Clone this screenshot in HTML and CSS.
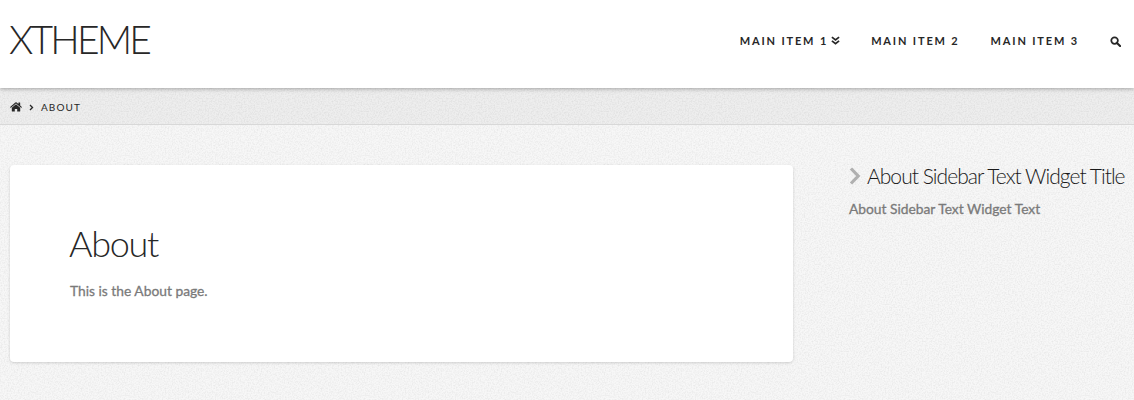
FILE: index.html
```html
<!DOCTYPE html>
<html lang="en">
<head>
    <meta charset="UTF-8">
    <meta name="viewport" content="width=device-width, initial-scale=1.0">
    <title>About - XTHEME</title>
    <link rel="stylesheet" href="styles.css">
</head>
<body>
    <header class="masthead">
        <a class="brand" href="#">XTHEME</a>
        <nav class="navbar">
            <a href="#">MAIN ITEM 1
                <svg class="icon-caret" viewBox="0 0 10 10" width="9" height="9"><path d="M1 1.2 5 4.4 9 1.2M1 5.4 5 8.6 9 5.4" fill="none" stroke="#272727" stroke-width="1.9"/></svg>
            </a>
            <a href="#">MAIN ITEM 2</a>
            <a href="#">MAIN ITEM 3</a>
            <a href="#" class="nav-search" aria-label="Search">
                <svg viewBox="0 0 12 12" width="11" height="11"><circle cx="5" cy="5" r="3.6" fill="none" stroke="#272727" stroke-width="1.9"/><path d="M7.6 7.6 11 11" stroke="#272727" stroke-width="2.3" stroke-linecap="round"/></svg>
            </a>
        </nav>
    </header>

    <div class="breadcrumbs">
        <svg class="icon-home" viewBox="0 0 24 20" width="12" height="10"><path d="M12 4.6 3.6 11.5V18a1 1 0 0 0 1 1h5v-5h4.8v5h5a1 1 0 0 0 1-1v-6.500zM23.700 9.800 20.400 7V1.500a.5.500 0 0 0-.5-.5h-2.600a.5.500 0 0 0-.5.500v2.400L13.400 1.200a2.200 2.200 0 0 0-2.800 0L.3 9.800a.5.500 0 0 0-.1.700l.9 1a.5.500 0 0 0 .7.1L12 3.100l10.200 8.500a.5.500 0 0 0 .7-.1l.9-1a.5.500 0 0 0-.1-.7z" fill="#272727"/></svg>
        <svg class="icon-sep" viewBox="0 0 6 8" width="5" height="7"><path d="M1.200 1 4.200 4 1.200 7" fill="none" stroke="#272727" stroke-width="1.600"/></svg>
        <span>ABOUT</span>
    </div>

    <main class="layout">
        <article class="card">
            <h1>About</h1>
            <p>This is the About page.</p>
        </article>
        <aside class="sidebar">
            <h4 class="widget-title">
                <svg viewBox="0 0 12 18" width="12" height="18"><path d="M2 1.500 9.200 9 2 16.500" fill="none" stroke="#b0b0b0" stroke-width="3.200"/></svg>
                About Sidebar Text Widget Title
            </h4>
            <p>About Sidebar Text Widget Text</p>
        </aside>
    </main>
</body>
</html>
```

FILE: styles.css
```css
* {
    box-sizing: border-box;
}
body {
    margin: 0;
    height: 400px;
    overflow: hidden;
    font-family: "Lato", sans-serif;
    color: #7a7a7a;
    /* faint paper grain, same idea as the theme's tiled background */
    background-color: #f7f7f7;
    background-image: url("data:image/svg+xml,%3Csvg xmlns='http://www.w3.org/2000/svg' width='240' height='240'%3E%3Cfilter id='n'%3E%3CfeTurbulence type='fractalNoise' baseFrequency='0.7' numOctaves='2' stitchTiles='stitch'/%3E%3CfeColorMatrix values='0 0 0 0 0 0 0 0 0 0 0 0 0 0 0 0 0 0 0.12 -0.045'/%3E%3C/filter%3E%3Crect width='240' height='240' filter='url(%23n)'/%3E%3C/svg%3E");
}
a {
    color: inherit;
    text-decoration: none;
}
.masthead {
    display: flex;
    justify-content: space-between;
    align-items: flex-start;
    position: relative;
    height: 88px;
    padding: 0 13px 0 9px;
    background-color: #fff;
    box-shadow: 0 1px 4px rgba(0, 0, 0, 0.3);
}
.brand {
    margin-top: 16px;
    font-size: 39px;
    font-weight: 300;
    line-height: 47px;
    letter-spacing: -2.8px;
    color: #272727;
}
.navbar {
    display: flex;
    align-items: center;
    gap: 31px;
    height: 81px;
    font-size: 11px;
    font-weight: 700;
    letter-spacing: 1.85px;
    color: #272727;
}
.navbar a {
    display: flex;
    align-items: center;
    gap: 3px;
}
.nav-search {
    margin-top: 1px;
}
.breadcrumbs {
    display: flex;
    align-items: center;
    gap: 7px;
    height: 37px;
    padding: 2px 10px 0;
    background-color: rgba(0, 0, 0, 0.035);
    border-bottom: 1px solid #d8d8d8;
    font-size: 10px;
    letter-spacing: 1.100px;
    color: #272727;
}
.layout {
    display: flex;
    align-items: flex-start;
    padding: 40px 0 0 10px;
}
.card {
    flex: 0 0 783px;
    height: 197px;
    padding: 57px 60px 0;
    background-color: #fff;
    border-radius: 4px;
    box-shadow: 0 1px 3px rgba(0, 0, 0, 0.16);
}
.card h1 {
    margin: 0 0 0 -1px;
    font-size: 36px;
    font-weight: 300;
    line-height: 43px;
    letter-spacing: -1.3px;
    color: #272727;
}
.card p {
    margin: 16px 0 0;
    font-size: 13.8px;
    font-weight: 400;
    line-height: 20px;
    -webkit-text-stroke: 0.3px #7a7a7a;
}
.sidebar {
    flex: 0 0 290px;
    margin-left: 56px;
    margin-top: -1px;
}
.widget-title {
    display: flex;
    align-items: center;
    gap: 6px;
    margin: 0;
    font-size: 21px;
    font-weight: 300;
    line-height: 23px;
    letter-spacing: -0.95px;
    white-space: nowrap;
    color: #1a1a1a;
}
.sidebar p {
    margin: 12px 0 0;
    font-size: 13.8px;
    font-weight: 400;
    line-height: 20px;
    -webkit-text-stroke: 0.3px #7a7a7a;
}
```
